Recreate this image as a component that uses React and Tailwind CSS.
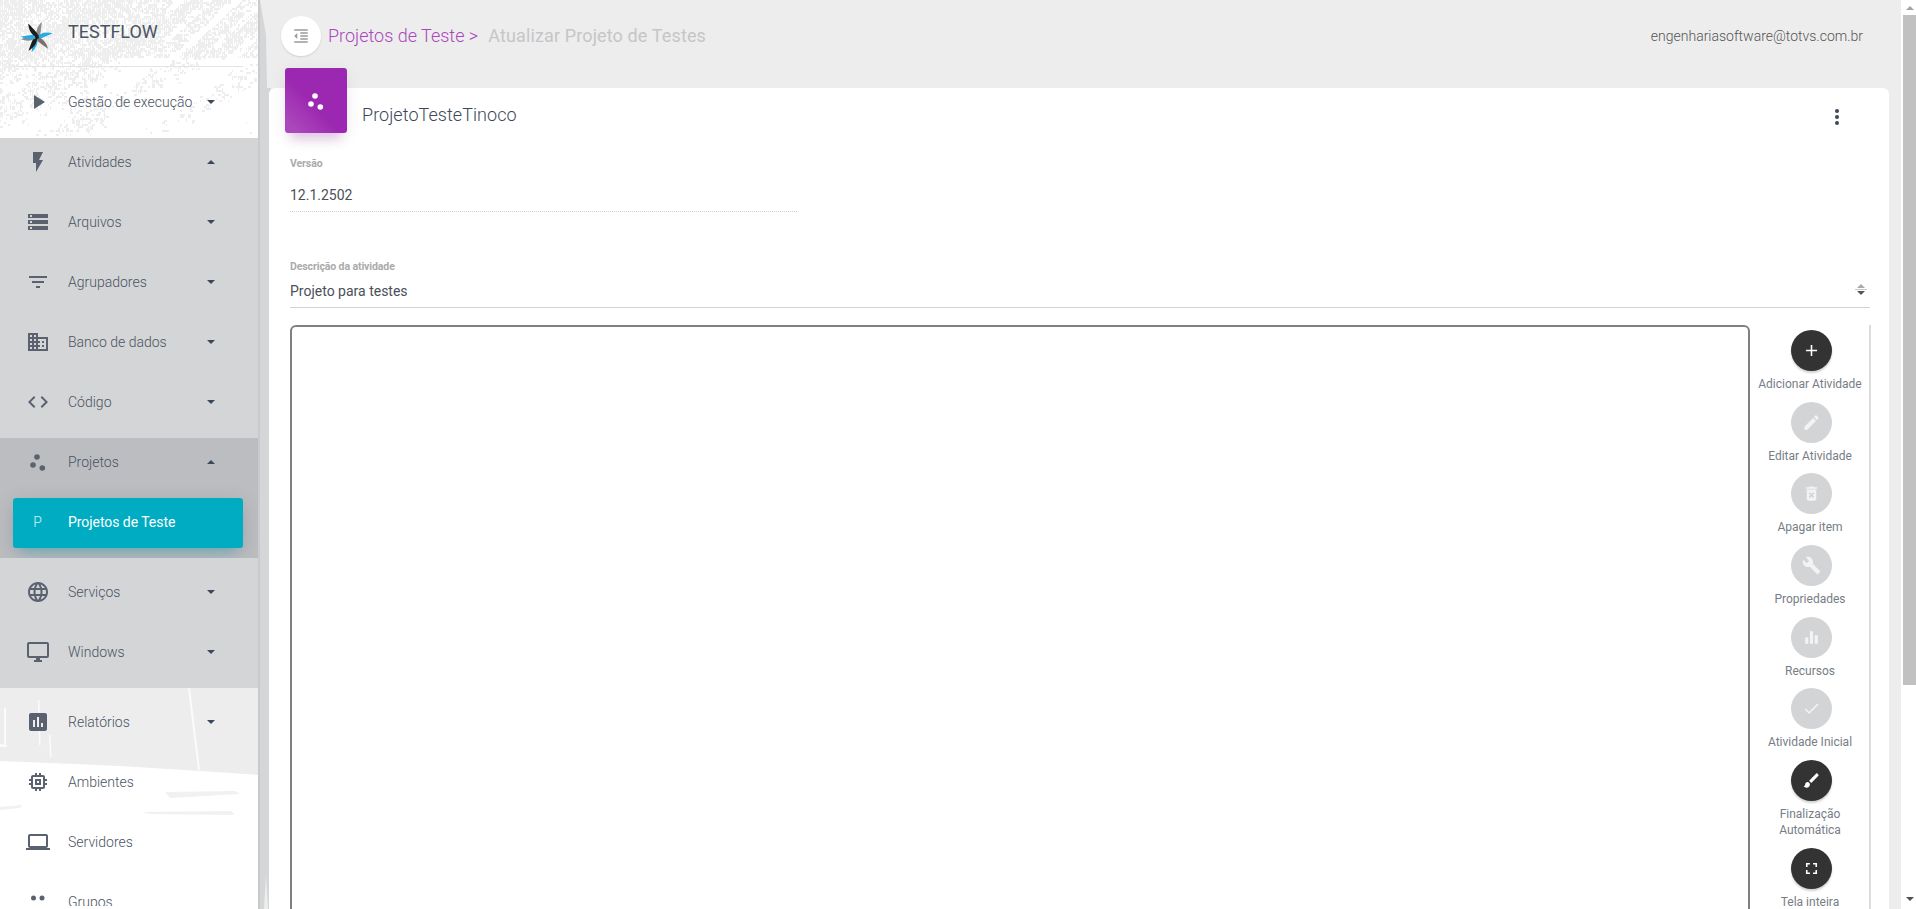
import React from 'react';

const ICONS = {
  play: 'M8 5v14l11-7z',
  flash: 'M7 2v11h3v9l7-12h-4l4-8z',
  storage: 'M2 20h20v-4H2v4zm2-3h2v2H4v-2zM2 4v4h20V4H2zm4 3H4V5h2v2zm-4 7h20v-4H2v4zm2-3h2v2H4v-2z',
  filter: 'M10 18h4v-2h-4v2zM3 6v2h18V6H3zm3 7h12v-2H6v2z',
  domain: 'M12 7V3H2v18h20V7H12zM6 19H4v-2h2v2zm0-4H4v-2h2v2zm0-4H4V9h2v2zm0-4H4V5h2v2zm4 12H8v-2h2v2zm0-4H8v-2h2v2zm0-4H8V9h2v2zm0-4H8V5h2v2zm10 12h-8v-2h2v-2h-2v-2h2v-2h-2V9h8v10zm-2-8h-2v2h2v-2zm0 4h-2v2h2v-2z',
  code: 'M9.4 16.6L4.8 12l4.6-4.6L8 6l-6 6 6 6 1.4-1.4zm5.2 0l4.6-4.6-4.6-4.6L16 6l6 6-6 6-1.4-1.4z',
  language: 'M11.99 2C6.47 2 2 6.48 2 12s4.47 10 9.99 10C17.52 22 22 17.52 22 12S17.52 2 11.99 2zm6.93 6h-2.95c-.32-1.25-.78-2.45-1.38-3.56 1.84.63 3.37 1.91 4.33 3.56zM12 4.04c.83 1.2 1.48 2.53 1.91 3.96h-3.82c.43-1.43 1.08-2.76 1.91-3.96zM4.26 14C4.1 13.36 4 12.69 4 12s.1-1.36.26-2h3.38c-.08.66-.14 1.32-.14 2 0 .68.06 1.34.14 2H4.26zm.82 2h2.95c.32 1.25.78 2.45 1.38 3.56-1.84-.63-3.37-1.9-4.33-3.56zm2.95-8H5.08c.96-1.66 2.49-2.93 4.33-3.56C8.81 5.55 8.35 6.75 8.03 8zM12 19.96c-.83-1.2-1.48-2.53-1.91-3.96h3.82c-.43 1.43-1.08 2.76-1.91 3.96zM14.34 14H9.66c-.09-.66-.16-1.32-.16-2 0-.68.07-1.35.16-2h4.68c.09.65.16 1.32.16 2 0 .68-.07 1.34-.16 2zm.25 5.56c.6-1.11 1.06-2.31 1.38-3.56h2.95c-.96 1.65-2.49 2.93-4.33 3.56zM16.36 14c.08-.66.14-1.32.14-2 0-.68-.06-1.34-.14-2h3.38c.16.64.26 1.31.26 2s-.1 1.36-.26 2h-3.38z',
  desktop: 'M21 2H3c-1.1 0-2 .9-2 2v12c0 1.1.9 2 2 2h7v2H8v2h8v-2h-2v-2h7c1.1 0 2-.9 2-2V4c0-1.1-.9-2-2-2zm0 14H3V4h18v12z',
  assessment: 'M19 3H5c-1.1 0-2 .9-2 2v14c0 1.1.9 2 2 2h14c1.1 0 2-.9 2-2V5c0-1.1-.9-2-2-2zM9 17H7v-7h2v7zm4 0h-2V7h2v10zm4 0h-2v-4h2v4z',
  memory: 'M15 9H9v6h6V9zm-2 4h-2v-2h2v2zm8-2V9h-2V7c0-1.1-.9-2-2-2h-2V3h-2v2h-2V3H9v2H7c-1.1 0-2 .9-2 2v2H3v2h2v2H3v2h2v2c0 1.1.9 2 2 2h2v2h2v-2h2v2h2v-2h2c1.1 0 2-.9 2-2v-2h2v-2h-2v-2h2zm-4 6H7V7h10v10z',
  laptop: 'M20 18c1.1 0 1.99-.9 1.99-2L22 6c0-1.1-.9-2-2-2H4c-1.1 0-2 .9-2 2v10c0 1.1.9 2 2 2H0v2h24v-2h-4zM4 6h16v10H4V6z',
  indent: 'M11 17h10v-2H11v2zm-8-5l4 4V8l-4 4zm0 9h18v-2H3v2zM3 3v2h18V3H3zm8 6h10V7H11v2zm0 4h10v-2H11v2z',
  add: 'M19 13h-6v6h-2v-6H5v-2h6V5h2v6h6v2z',
  edit: 'M3 17.25V21h3.75L17.81 9.94l-3.75-3.75L3 17.25zM20.71 7.04c.39-.39.39-1.02 0-1.41l-2.34-2.34c-.39-.39-1.02-.39-1.41 0l-1.83 1.83 3.75 3.75 1.83-1.83z',
  trash: 'M6 19c0 1.1.9 2 2 2h8c1.1 0 2-.9 2-2V7H6v12zm2.46-7.12l1.41-1.41L12 12.59l2.12-2.12 1.41 1.41L13.41 14l2.12 2.12-1.41 1.41L12 15.41l-2.12 2.12-1.41-1.41L10.59 14l-2.13-2.12zM15.5 4l-1-1h-5l-1 1H5v2h14V4z',
  build: 'M22.7 19l-9.1-9.1c.9-2.3.4-5-1.5-6.9-2-2-5-2.4-7.4-1.3L9 6 6 9 1.6 4.7C.4 7.1.9 10.1 2.9 12.1c1.9 1.9 4.6 2.4 6.9 1.5l9.1 9.1c.4.4 1 .4 1.4 0l2.3-2.3c.5-.4.5-1.1.1-1.4z',
  bars: 'M10 20h4V4h-4v16zm-6 0h4v-8H4v8zM16 9v11h4V9h-4z',
  check: 'M9 16.17L4.83 12l-1.42 1.41L9 19 21 7l-1.41-1.41z',
  brush: 'M7 14c-1.66 0-3 1.34-3 3 0 1.31-1.16 2-2 2 .92 1.22 2.49 2 4 2 2.21 0 4-1.79 4-4 0-1.66-1.34-3-3-3zm13.71-9.37l-1.34-1.34c-.39-.39-1.02-.39-1.41 0L9 12.25 11.75 15l8.96-8.96c.39-.39.39-1.02 0-1.41z',
  fullscreen: 'M7 14H5v5h5v-2H7v-3zm-2-4h2V7h3V5H5v5zm12 7h-3v2h5v-5h-2v3zM14 5v2h3v3h2V5h-5z',
};

function Icon({ name, className }) {
  return (
    <svg viewBox="0 0 24 24" className={className} fill="currentColor">
      <path d={ICONS[name]} />
    </svg>
  );
}

function Dots({ className }) {
  return (
    <svg viewBox="0 0 24 24" className={className} fill="currentColor">
      <circle cx="11" cy="7" r="2.8" />
      <circle cx="7" cy="15" r="2.8" />
      <circle cx="16.3" cy="18" r="2.8" />
    </svg>
  );
}

function GroupDots({ className }) {
  return (
    <svg viewBox="0 0 24 24" className={className} fill="currentColor">
      <circle cx="7.5" cy="8" r="2.5" />
      <circle cx="16" cy="8" r="2.5" />
    </svg>
  );
}

// speckled paper texture at the top of the sidebar
function speckle() {
  let seed = 11;
  const rnd = () => {
    seed = (seed * 16807) % 2147483647;
    return seed / 2147483647;
  };
  let d = '';
  for (let y = 0; y < 136; y += 2) {
    for (let x = 0; x < 258; x += 2) {
      const wave = 0.2 * Math.sin(x * 0.07 + y * 0.12) + 0.1 * Math.sin(x * 0.23 - y * 0.19);
      let density = y < 58 ? 0.8 : x < 105 ? 0.5 - (y - 58) / 190 : 0.14 - (y - 58) / 300;
      if (x > 165 && y < 58 && Math.sin((x + y * 1.1) * 0.22) > 0.45) density = 0.15;
      if (rnd() < density + wave) {
        const w = 1 + Math.floor(rnd() * 3);
        d += `M${x} ${y}h${w}v2h-${w}z`;
      }
    }
  }
  return d;
}
const SPECKLE = speckle();

function SidebarTexture() {
  return (
    <svg className="absolute top-0 left-0" width="258" height="909" viewBox="0 0 258 909">
      <path d={SPECKLE} fill="#eeeeee" />
      <path d="M0 680H258V775L200 771L120 766L50 763L0 761Z" fill="#ededed" />
      <g fill="#fbfbfb">
        <path d="M188 688L190 688L200 770L198 770Z" />
        <path d="M4 708L6 708L6 746L4 746Z" />
        <path d="M0 744L7 745L7 747L0 747Z" />
        <path d="M38 700L39.5 700L40.5 745L39 745Z" />
        <path d="M49 735L50.5 735L51.5 757L50 757Z" />
      </g>
      <g fill="#f1f1f1">
        <path d="M165 792L235 791L240 794L170 798Z" />
        <path d="M142 812L232 811L234 815L150 814Z" />
        <path d="M0 807L22 805L20 808L0 810Z" />
      </g>
    </svg>
  );
}

function Logo() {
  const blades = [
    ['#8d8d8d', 18],
    ['#29abe2', 77],
    ['#7d6f6a', 137],
    ['#29abe2', 200],
    ['#1c1c1c', 212],
    ['#8a8a8a', 262],
    ['#29abe2', 272],
    ['#1c1c1c', -33],
  ];
  return (
    <svg viewBox="-20 -20 40 40" className="w-[38px] h-[38px]">
      {blades.map(([color, angle]) => (
        <path key={angle} d="M0 0C-4 -5 -3 -12 0 -17C1 -11 3 -5 2 0Z" fill={color} transform={`rotate(${angle})`} />
      ))}
      <circle r="2" fill="#1c1c1c" />
    </svg>
  );
}

function Caret({ up }) {
  return up ? (
    <span className="mr-[43px] w-0 h-0 border-x-[4px] border-x-transparent border-b-[4px] border-b-[#3c4858]" />
  ) : (
    <span className="mr-[43px] w-0 h-0 border-x-[4px] border-x-transparent border-t-[4px] border-t-[#3c4858]" />
  );
}

function NavItem({ icon, label, caret, dots, groupDots }) {
  return (
    <div className="flex items-center h-12 shrink-0 pl-[26px] text-[#4a5462]">
      {dots && <Dots className="w-6 h-6 text-[#5a6270]" />}
      {groupDots && <GroupDots className="w-6 h-6 text-[#5a6270]" />}
      {icon && <Icon name={icon} className="w-6 h-6 text-[#5a6270]" />}
      <span className="ml-[18px] flex-1 text-sm font-light">{label}</span>
      {caret && <Caret up={caret === 'up'} />}
    </div>
  );
}

function Sidebar() {
  return (
    <aside className="relative w-[258px] shrink-0 h-full bg-white overflow-hidden">
      <SidebarTexture />
      <div className="relative flex flex-col h-[906px] overflow-hidden">
        <div className="flex items-center h-[67px] ml-[13px] mr-[15px] border-b border-[#e4e4e4] shrink-0">
          <div className="ml-[5px] mt-[7px] w-[38px] h-[38px]">
            <Logo />
          </div>
          <span className="ml-[12px] -mt-[3px] text-lg text-[#4a5462]">TESTFLOW</span>
        </div>
        <div className="mt-[11px] pb-3">
          <NavItem icon="play" label="Gestão de execução" caret="down" />
        </div>
        <div className="flex flex-col bg-[#d4d5d7]">
          <div className="flex flex-col gap-3 pb-3">
            <NavItem icon="flash" label="Atividades" caret="up" />
            <NavItem icon="storage" label="Arquivos" caret="down" />
            <NavItem icon="filter" label="Agrupadores" caret="down" />
            <NavItem icon="domain" label="Banco de dados" caret="down" />
            <NavItem icon="code" label="Código" caret="down" />
          </div>
          <div className="h-[120px] bg-[#bcbdc1] overflow-hidden">
            <NavItem dots label="Projetos" caret="up" />
            <div className="mt-3 ml-[13px] mr-[15px] h-[50px] pb-[2px] flex items-center rounded-[3px] bg-[#00acc1] text-white shadow-[0_12px_20px_-10px_rgba(0,172,193,0.28),0_4px_20px_0_rgba(0,0,0,0.12),0_7px_8px_-5px_rgba(0,172,193,0.2)]">
              <span className="w-[55px] text-center pr-[6px] text-sm font-light text-[#d5f3f7]">P</span>
              <span className="text-sm tracking-[-0.05px]">Projetos de Teste</span>
            </div>
          </div>
          <div className="flex flex-col gap-3 pt-[10px] pb-3">
            <NavItem icon="language" label="Serviços" caret="down" />
            <NavItem icon="desktop" label="Windows" caret="down" />
          </div>
        </div>
        <div className="flex flex-col gap-3 pt-[10px]">
          <NavItem icon="assessment" label="Relatórios" caret="down" />
          <NavItem icon="memory" label="Ambientes" />
          <NavItem icon="laptop" label="Servidores" />
          <NavItem groupDots label="Grupos" />
        </div>
      </div>
    </aside>
  );
}

const TOOLS = [
  { icon: 'add', label: 'Adicionar Atividade', dark: true },
  { icon: 'edit', label: 'Editar Atividade' },
  { icon: 'trash', label: 'Apagar item' },
  { icon: 'build', label: 'Propriedades' },
  { icon: 'bars', label: 'Recursos' },
  { icon: 'check', label: 'Atividade Inicial' },
  { icon: 'brush', label: 'Finalização Automática', dark: true },
  { icon: 'fullscreen', label: 'Tela inteira', dark: true },
];

function Tool({ icon, label, dark }) {
  return (
    <div className="flex flex-col items-center w-[110px]">
      <div
        className={
          dark
            ? 'ml-[2px] w-[41px] h-[41px] rounded-full flex items-center justify-center bg-[#333333] text-white shadow-[0_2px_2px_rgba(0,0,0,0.18)]'
            : 'ml-[2px] w-[41px] h-[41px] rounded-full flex items-center justify-center bg-[#d3d4d6] text-[#f3f3f3]'
        }
      >
        <Icon name={icon} className="w-[19px] h-[19px]" />
      </div>
      <span className="mt-[5px] text-xs leading-4 text-center text-[#777d85]">{label}</span>
    </div>
  );
}

function Card() {
  return (
    <section className="relative mt-0 ml-[11px] w-[1620px] rounded-t-[6px] bg-white pl-[21px] h-[900px]">
      <div className="flex h-[57px]">
        <div className="-ml-[5px] -mt-[20px] w-[62px] h-[65px] rounded-[3px] flex items-center justify-center bg-gradient-to-tr from-[#ab47bc] from-10% to-[#9c27b0] to-45% text-white shadow-[0_12px_10px_-6px_rgba(156,39,176,0.22),0_4px_18px_0_rgba(0,0,0,0.07)]">
          <Dots className="w-[24px] h-[24px]" />
        </div>
        <h1 className="ml-[15px] mt-[15px] text-lg leading-[24px] font-light tracking-[0.05px] text-[#3c4858]">ProjetoTesteTinoco</h1>
        <svg viewBox="0 0 24 24" className="ml-auto mr-[40px] mt-[17px] w-6 h-6" fill="#3c4858">
          <circle cx="12" cy="6" r="2" />
          <circle cx="12" cy="12" r="2" />
          <circle cx="12" cy="18" r="2" />
        </svg>
      </div>
      <label className="block mt-[11px] text-[10.5px] leading-4 font-bold tracking-[-0.1px] text-[#aaaaaa]">Versão</label>
      <div className="w-[507px] mt-[13px] h-[27px] text-sm leading-5 text-[#4a5058] border-b border-dotted border-[#cfcfcf]">12.1.2502</div>
      <label className="block mt-[47px] text-[10.5px] leading-4 font-bold tracking-[-0.1px] text-[#aaaaaa]">Descrição da atividade</label>
      <div className="relative w-[1580px] mt-[6px] h-[27px] text-sm leading-5 text-[#4a5058] border-b border-[#d2d2d2]">
        Projeto para testes
        <div className="absolute right-[3px] top-[3px] flex flex-col items-center">
          <span className="w-0 h-0 border-x-[4px] border-x-transparent border-b-[4px] border-b-[#aaaaaa]" />
          <span className="w-[12px] h-px my-[1px] bg-[#c8c8c8]" />
          <span className="w-0 h-0 border-x-[4px] border-x-transparent border-t-[4px] border-t-[#555555]" />
        </div>
      </div>
      <div className="flex w-[1581px] mt-[17px] h-[700px]">
        <div className="w-[1460px] shrink-0 border-2 border-[#808080] rounded-[6px]" />
        <div className="flex-1 flex flex-col items-center gap-[9.67px] pt-[5px] pl-px border-r-2 border-[#dcdcdc]">
          {TOOLS.map((t) => (
            <Tool key={t.label} {...t} />
          ))}
        </div>
      </div>
    </section>
  );
}

function Main() {
  return (
    <main className="relative flex-1 min-w-0 h-full bg-[#ededed] overflow-hidden">
      <div className="absolute top-0 left-0 w-[13px] h-full bg-[#d5d6d8] border-l-2 border-[#c9cacc] [clip-path:polygon(0_0,2px_0,8px_35px,9px_88px,13px_88px,13px_100%,10px_100%,8px_875px,6px_100%,0_100%)]" />
      <header className="relative flex items-center h-[88px] pb-[17px] pl-[23px] pr-[38px]">
        <button className="w-[40px] h-[40px] mt-[1px] rounded-full bg-white flex items-center justify-center text-[#9a9a9a] shadow-[0_1px_2px_rgba(0,0,0,0.12)]">
          <Icon name="indent" className="w-[18px] h-[18px]" />
        </button>
        <span className="ml-[7px] text-lg font-light text-[#ab47bc]">Projetos de Teste &gt;</span>
        <span className="ml-[10px] text-lg tracking-[0.13px] text-[#c6c6c6]">Atualizar Projeto de Testes</span>
        <span className="ml-auto text-sm font-light text-[#555555]">engenhariasoftware@totvs.com.br</span>
      </header>
      <Card />
    </main>
  );
}

function Scrollbar() {
  return (
    <div className="w-[15px] shrink-0 h-full bg-white flex flex-col items-end">
      <div className="w-[13px] h-[15px] flex items-center justify-center">
        <span className="w-0 h-0 border-x-[4px] border-x-transparent border-b-[4px] border-b-[#a3a3a3]" />
      </div>
      <div className="w-[13px] h-[670px] bg-[#c1c1c1]" />
      <div className="mt-auto w-[13px] h-[20px] flex items-center justify-center">
        <span className="w-0 h-0 border-x-[4px] border-x-transparent border-t-[4px] border-t-[#505050]" />
      </div>
    </div>
  );
}

export default function App() {
  return (
    <div className="flex w-[1916px] h-[909px] overflow-hidden font-[Roboto,sans-serif]">
      <Sidebar />
      <Main />
      <Scrollbar />
    </div>
  );
}
